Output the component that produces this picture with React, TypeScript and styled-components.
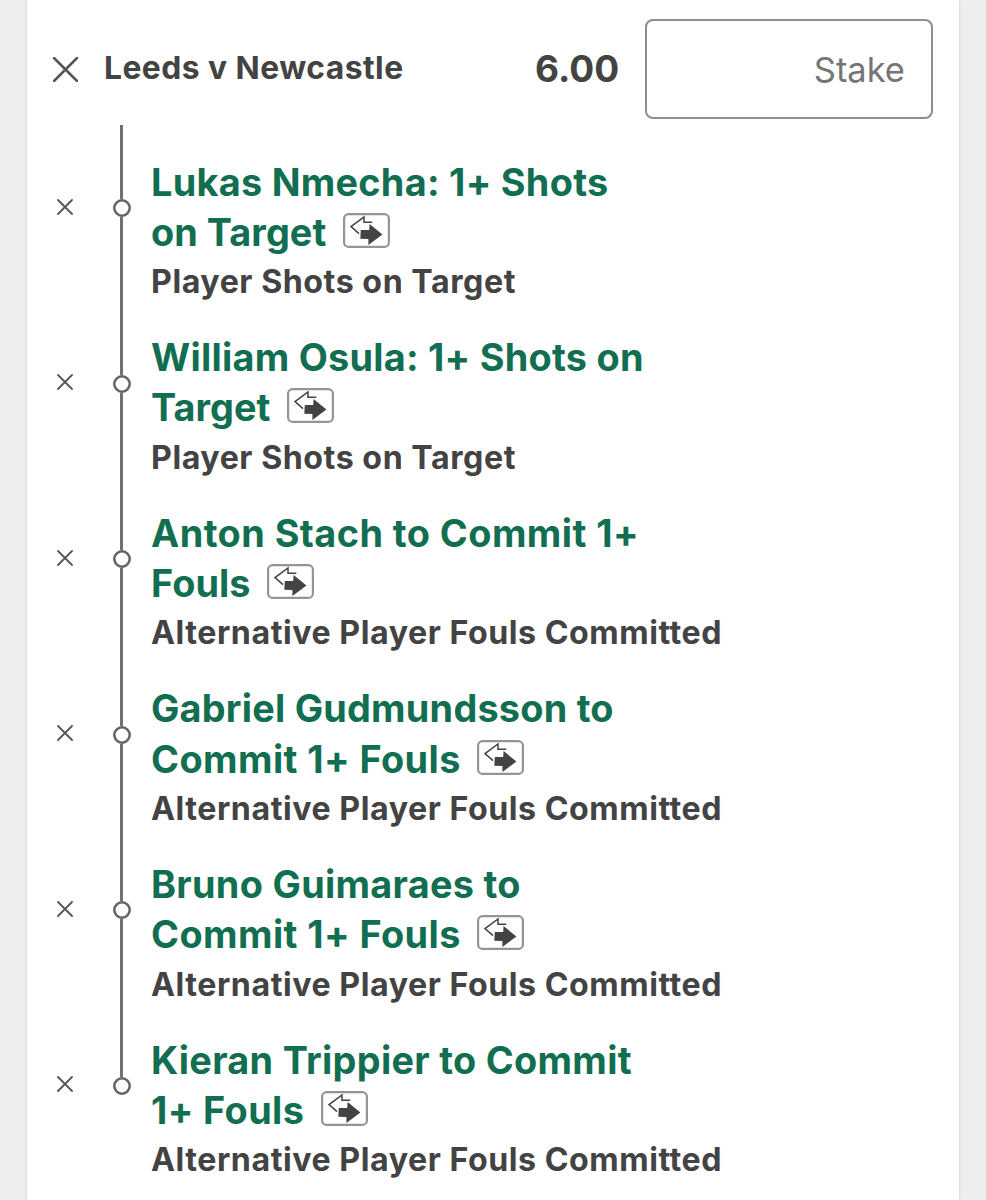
import React from "react";
import styled, { createGlobalStyle } from "styled-components";

const GlobalStyle = createGlobalStyle`
  * { box-sizing: border-box; }
  body {
    margin: 0;
    background: #eeeeee;
    color: #434343;
    font-family: Inter, "Liberation Sans", sans-serif;
  }
`;

const Card = styled.main`
  width: 932px;
  height: 1200px;
  margin-left: 27px;
  overflow: hidden;
  background: #fff;
  box-shadow: 0 0 3px rgba(0, 0, 0, 0.16);
`;

const Header = styled.header`
  display: flex;
  align-items: center;
  height: 124.5px;
  padding: 14px 26px 0 0;
`;

const RemoveButton = styled.button`
  display: flex;
  align-items: center;
  justify-content: center;
  flex: none;
  width: 76px;
  height: 40px;
  padding: 0;
  border: 0;
  background: none;
`;

const EventName = styled.h1`
  flex: 1;
  margin: -2px 0 0 1px;
  font-size: 31.8px;
  font-weight: 650;
  letter-spacing: 0.46px;
  line-height: 40px;
  white-space: nowrap;
`;

const Odds = styled.span`
  width: 84px;
  margin-right: 26px;
  font-size: 37px;
  font-weight: 650;
  line-height: 40px;
  text-align: right;
`;

const StakeField = styled.label`
  display: flex;
  align-items: center;
  justify-content: flex-end;
  width: 288px;
  height: 100px;
  padding: 1px 26px 0 0;
  border: 2px solid #8e8e8e;
  border-radius: 8px;
  color: #757575;
  font-size: 34.5px;
`;

const Legs = styled.ul`
  margin: 0;
  padding: 0;
  list-style: none;
`;

const LegRow = styled.li<{ $first: boolean }>`
  display: grid;
  grid-template-columns: 76px 37px 1fr;
  height: ${(p) => (p.$first ? 182.9 : 175.6)}px;
  --lead: ${(p) => (p.$first ? 32.5 : 25.2)}px;

  ${RemoveButton} {
    margin-top: calc(var(--lead) + 29.5px);
  }
`;

const Rail = styled.div`
  display: flex;
  flex-direction: column;
  align-items: center;
`;

const Segment = styled.span<{ $lead?: boolean }>`
  width: 3px;
  background: #707070;
  ${(p) => (p.$lead ? "height: calc(var(--lead) + 42px);" : "flex: 1;")}
`;

const DotMark = styled.svg`
  flex: none;
  width: 18px;
  height: 18px;
`;

const LegText = styled.div`
  padding: calc(var(--lead) - 0.5px) 0 0 11px;
  white-space: nowrap;
`;

const Selection = styled.div<{ $spacing: number }>`
  display: flex;
  align-items: center;
  height: 50.2px;
  color: #126e51;
  font-size: 37.8px;
  font-weight: 740;
  letter-spacing: ${(p) => p.$spacing}px;
`;

const Market = styled.div`
  height: 50px;
  padding-top: 0.3px;
  font-size: 32.2px;
  font-weight: 650;
  letter-spacing: 0.53px;
  line-height: 50px;
`;

const SwapButton = styled.button`
  flex: none;
  width: 47px;
  height: 35px;
  margin: -2.8px 0 0 16.3px;
  padding: 0;
  border: 0;
  background: none;

  svg { display: block; }
`;

const Dot = () => (
  <DotMark viewBox="0 0 18 18">
    <circle cx="9" cy="9" r="7.7" fill="#fff" stroke="#636363" strokeWidth="2.5" />
  </DotMark>
);

const Cross = ({ size, weight }: { size: number; weight: number }) => (
  <svg width={size} height={size} viewBox={`0 0 ${size} ${size}`}>
    <path
      d={`M1 1L${size - 1} ${size - 1}M${size - 1} 1L1 ${size - 1}`}
      stroke="#555"
      strokeWidth={weight}
      strokeLinecap="round"
    />
  </svg>
);

const SwapIcon = () => (
  <svg width="47" height="35" viewBox="0 0 47 35">
    <rect x="1.1" y="1.1" width="44.8" height="32.8" rx="4.5" fill="#fff" stroke="#949494" strokeWidth="2.2" />
    <path d="M29.3 9.3H21V4L8 13.6L16 20.6" fill="none" stroke="#434343" strokeWidth="1.5" />
    <path d="M17.8 17H26.2L26.6 11L39.4 21.6L25.4 32V26L17.3 25.7Z" fill="#434343" />
  </svg>
);

interface Leg {
  lines: [string, string];
  spacing: [number, number];
  market: string;
}

const SHOTS = "Player Shots on Target";
const FOULS = "Alternative Player Fouls Committed";

const legs: Leg[] = [
  { lines: ["Lukas Nmecha: 1+ Shots", "on Target"], spacing: [0.29, 0.06], market: SHOTS },
  { lines: ["William Osula: 1+ Shots on", "Target"], spacing: [0.26, 0.06], market: SHOTS },
  { lines: ["Anton Stach to Commit 1+", "Fouls"], spacing: [0.46, 0.06], market: FOULS },
  { lines: ["Gabriel Gudmundsson to", "Commit 1+ Fouls"], spacing: [0.24, 0.44], market: FOULS },
  { lines: ["Bruno Guimaraes to", "Commit 1+ Fouls"], spacing: [0.31, 0.44], market: FOULS },
  { lines: ["Kieran Trippier to Commit", "1+ Fouls"], spacing: [0.31, 0.4], market: FOULS },
];

export default function App() {
  return (
    <>
      <GlobalStyle />
      <Card>
        <Header>
          <RemoveButton aria-label="Remove bet">
            <Cross size={25} weight={2.5} />
          </RemoveButton>
          <EventName>Leeds v Newcastle</EventName>
          <Odds>6.00</Odds>
          <StakeField>Stake</StakeField>
        </Header>
        <Legs>
          {legs.map((leg, i) => (
            <LegRow key={leg.lines[0]} $first={i === 0}>
              <RemoveButton aria-label="Remove selection">
                <Cross size={16} weight={1.8} />
              </RemoveButton>
              <Rail>
                <Segment $lead />
                <Dot />
                {i < legs.length - 1 && <Segment />}
              </Rail>
              <LegText>
                <Selection $spacing={leg.spacing[0]}>{leg.lines[0]}</Selection>
                <Selection $spacing={leg.spacing[1]}>
                  {leg.lines[1]}
                  <SwapButton aria-label="Swap selection">
                    <SwapIcon />
                  </SwapButton>
                </Selection>
                <Market>{leg.market}</Market>
              </LegText>
            </LegRow>
          ))}
        </Legs>
      </Card>
    </>
  );
}
